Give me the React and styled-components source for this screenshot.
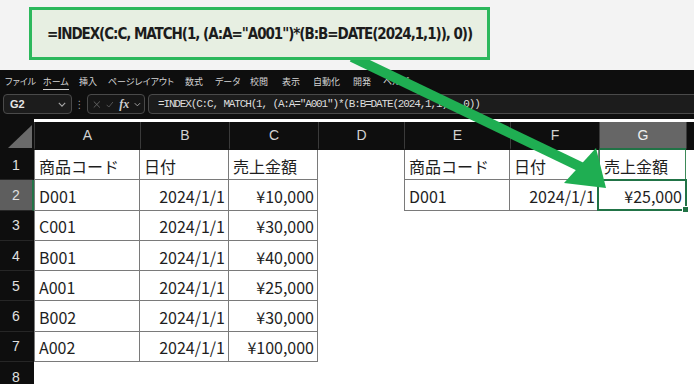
import React from 'react'
import styled, { createGlobalStyle } from 'styled-components'

const GlobalStyle = createGlobalStyle`
  html, body {
    margin: 0;
    padding: 0;
    background: #ffffff;
    overflow: hidden;
  }
`

// Data
const formula = '=INDEX(C:C, MATCH(1, (A:A="A001")*(B:B=DATE(2024,1,1)), 0))'

const menus = [
  { label: 'ファイル', width: 38 },
  { label: 'ホーム', width: 36, active: true },
  { label: '挿入', width: 29 },
  { label: 'ページレイアウト', width: 77 },
  { label: '数式', width: 30 },
  { label: 'データ', width: 35 },
  { label: '校閲', width: 32 },
  { label: '表示', width: 31 },
  { label: '自動化', width: 40 },
  { label: '開発', width: 30 },
  { label: 'ヘルプ', width: 40 },
]

const columns = ['A', 'B', 'C', 'D', 'E', 'F', 'G', '']

const leftTable = [
  ['商品コード', '日付', '売上金額'],
  ['D001', '2024/1/1', '¥10,000'],
  ['C001', '2024/1/1', '¥30,000'],
  ['B001', '2024/1/1', '¥40,000'],
  ['A001', '2024/1/1', '¥25,000'],
  ['B002', '2024/1/1', '¥30,000'],
  ['A002', '2024/1/1', '¥100,000'],
]

const rightTable = [
  ['商品コード', '日付', '売上金額'],
  ['D001', '2024/1/1', '¥25,000'],
]

export default function App() {
  const rows = [1, 2, 3, 4, 5, 6, 7, 8]

  const renderCell = (row, colIndex) => {
    const r = row - 1
    let value = ''
    let bordered = false
    let pos = 0
    if (colIndex <= 2 && r < leftTable.length) {
      value = leftTable[r][colIndex]
      bordered = true
      pos = colIndex
    } else if (colIndex >= 4 && colIndex <= 6 && r < rightTable.length) {
      value = rightTable[r][colIndex - 4]
      bordered = true
      pos = colIndex - 4
    }
    const numeric = row > 1 && pos > 0
    const selected = colIndex === 6 && row === 2
    const inSelCol = colIndex === 6 && row === 1
    return (
      <Cell
        key={`${row}-${colIndex}`}
        $bordered={bordered}
        $first={bordered && pos === 0}
        $right={numeric}
        $colSel={inSelCol}
      >
        {value}
        {selected && <Selection><Handle /></Selection>}
      </Cell>
    )
  }

  return (
    <Page>
      <GlobalStyle />
      <Top>
        <Callout>{formula}</Callout>
      </Top>

      <Ribbon>
        <Menu>
          {menus.map((m) => (
            <MenuItem key={m.label} $w={m.width} $active={m.active}>
              <span>{m.label}</span>
            </MenuItem>
          ))}
        </Menu>
        <FormulaRow>
          <NameBox>
            <span>G2</span>
            <Chevron viewBox="0 0 10 6">
              <path d="M1 1l4 4 4-4" />
            </Chevron>
          </NameBox>
          <Dots>⋮</Dots>
          <FxBox>
            <FxIcon viewBox="0 0 10 10">
              <path d="M1 1l8 8M9 1l-8 8" />
            </FxIcon>
            <FxIcon viewBox="0 0 12 10">
              <path d="M1 5.5l3.5 3.5L11 1" />
            </FxIcon>
            <FxText>fx</FxText>
            <Chevron viewBox="0 0 10 6">
              <path d="M1 1l4 4 4-4" />
            </Chevron>
          </FxBox>
          <FormulaInput>{formula}</FormulaInput>
        </FormulaRow>
      </Ribbon>

      <Sheet>
        <Corner />
        {columns.map((c, i) => (
          <ColHeader key={i} $active={c === 'G'}>{c}</ColHeader>
        ))}
        {rows.map((row) => (
          <React.Fragment key={row}>
            <RowHeader $active={row === 2}>{row}</RowHeader>
            {columns.map((c, i) => renderCell(row, i))}
          </React.Fragment>
        ))}
      </Sheet>

      <Arrow viewBox="0 0 694 384">
        <line x1="352" y1="57" x2="583" y2="168" stroke="#1fae52" strokeWidth="10" />
        <polygon points="596,148 606,188 564,183" fill="#1fae52" />
      </Arrow>
    </Page>
  )
}

const Page = styled.div`
  position: relative;
  width: 694px;
  height: 384px;
  overflow: hidden;
  display: flex;
  flex-direction: column;
  background: #ffffff;
  & > * {
    flex: none;
  }
`

const Top = styled.div`
  height: 70px;
  background: #f3f3f3;
  padding: 7px 0 0 29px;
  box-sizing: border-box;
`

const Callout = styled.div`
  position: relative;
  z-index: 2;
  width: 461px;
  height: 53px;
  box-sizing: border-box;
  border: 3px solid #2cb85c;
  background: #e7efe2;
  display: flex;
  align-items: center;
  justify-content: center;
  font-family: "DejaVu Sans Condensed", "DejaVu Sans", sans-serif;
  font-weight: bold;
  font-size: 15px;
  letter-spacing: -1.05px;
  color: #1c1c1c;
  white-space: nowrap;
  padding-top: 1px;
`

const Ribbon = styled.div`
  background: #0e0e0e;
  height: 49px;
  display: flex;
  flex-direction: column;
`

const Menu = styled.div`
  height: 22px;
  display: flex;
  align-items: center;
  padding-left: 5px;
  font-family: "Noto Sans CJK JP", sans-serif;
  font-feature-settings: "palt";
  font-size: 9px;
  color: #d4d4d4;
  white-space: nowrap;
`

const MenuItem = styled.div`
  width: ${(p) => p.$w}px;
  flex: none;
  span {
    border-bottom: ${(p) => (p.$active ? '1.5px solid #d4d4d4' : 'none')};
    padding-bottom: 1px;
  }
`

const FormulaRow = styled.div`
  height: 27px;
  display: flex;
  align-items: center;
  padding: 0 0 3px 3px;
  box-sizing: border-box;
`

const NameBox = styled.div`
  width: 69px;
  height: 20px;
  box-sizing: border-box;
  border: 1px solid #4a4a4a;
  border-radius: 4px;
  background: #1c1c1c;
  display: flex;
  align-items: center;
  justify-content: space-between;
  padding: 0 5px 0 6px;
  font-family: "Liberation Sans", sans-serif;
  font-size: 11px;
  font-weight: bold;
  color: #e6e6e6;
`

const Chevron = styled.svg`
  width: 8px;
  height: 5px;
  fill: none;
  stroke: #a8a8a8;
  stroke-width: 1.4;
`

const Dots = styled.div`
  width: 15px;
  text-align: center;
  color: #9a9a9a;
  font-family: "DejaVu Sans", sans-serif;
  font-size: 10px;
`

const FxBox = styled.div`
  width: 58px;
  height: 20px;
  box-sizing: border-box;
  border: 1px solid #4a4a4a;
  border-radius: 4px;
  background: #161616;
  display: flex;
  align-items: center;
  gap: 5px;
  padding: 0 3px 0 5px;
`

const FxIcon = styled.svg`
  width: 9px;
  height: 9px;
  fill: none;
  stroke: #6f6f6f;
  stroke-width: 1.1;
`

const FxText = styled.span`
  font-family: "Liberation Serif", serif;
  font-style: italic;
  font-weight: bold;
  font-size: 12px;
  color: #cfcfcf;
  margin-left: 1px;
`

const FormulaInput = styled.div`
  flex: 1;
  height: 20px;
  margin-left: 3px;
  margin-right: -6px;
  box-sizing: border-box;
  border: 1px solid #4a4a4a;
  border-radius: 4px;
  background: #1c1c1c;
  display: flex;
  align-items: center;
  padding-left: 9px;
  font-family: "Liberation Mono", monospace;
  font-size: 11px;
  letter-spacing: -1.15px;
  color: #dcdcdc;
  white-space: nowrap;
`

const Sheet = styled.div`
  display: grid;
  grid-template-columns: 34px 106px 89px 89px 86px 106px 89px 87px 1fr;
  grid-template-rows: 31px;
  grid-auto-rows: 30.3px;
  font-family: "Noto Sans CJK JP", sans-serif;
`

const Corner = styled.div`
  background: #0e0e0e;
  position: relative;
  &::after {
    content: '';
    position: absolute;
    left: 8px;
    top: 6px;
    width: 24px;
    height: 23px;
    background: #6a6a6a;
    clip-path: polygon(100% 0, 100% 100%, 0 100%);
  }
`

const ColHeader = styled.div`
  background: ${(p) => (p.$active ? '#666666' : '#0e0e0e')};
  border-left: 1px solid #3a3a3a;
  border-bottom: 2px solid ${(p) => (p.$active ? '#217346' : '#0e0e0e')};
  margin-top: 3px;
  display: flex;
  align-items: center;
  justify-content: center;
  font-family: "Liberation Sans", sans-serif;
  font-size: 14px;
  color: ${(p) => (p.$active ? '#f0f0f0' : '#d2d2d2')};
`

const RowHeader = styled.div`
  background: ${(p) => (p.$active ? '#5e5e5e' : '#0e0e0e')};
  border-right: 2px solid ${(p) => (p.$active ? '#217346' : '#0e0e0e')};
  border-bottom: 1px solid #262626;
  display: flex;
  align-items: center;
  justify-content: center;
  box-sizing: border-box;
  font-family: "Liberation Sans", sans-serif;
  font-size: 14px;
  color: #e0e0e0;
`

const Cell = styled.div`
  position: relative;
  box-sizing: border-box;
  display: flex;
  align-items: center;
  justify-content: ${(p) => (p.$right ? 'flex-end' : 'flex-start')};
  padding: 2px 3px 0 4px;
  font-size: 16px;
  color: #1e1e1e;
  white-space: nowrap;
  border-right: 1px solid ${(p) => (p.$colSel ? '#3d8a58' : p.$bordered ? '#7a7a7a' : 'transparent')};
  border-bottom: 1px solid ${(p) => (p.$bordered ? '#7a7a7a' : 'transparent')};
  border-left: ${(p) => (p.$first ? '1px solid #7a7a7a' : p.$colSel ? '1px solid #3d8a58' : 'none')};
`

const Selection = styled.div`
  position: absolute;
  left: -2px;
  top: -1px;
  right: -2px;
  bottom: -1px;
  border: 2px solid #217346;
`

const Handle = styled.div`
  position: absolute;
  right: -4px;
  bottom: -4px;
  width: 5px;
  height: 5px;
  background: #217346;
  border: 1px solid #ffffff;
`

const Arrow = styled.svg`
  position: absolute;
  left: 0;
  top: 0;
  width: 694px;
  height: 384px;
  z-index: 1;
  pointer-events: none;
`
